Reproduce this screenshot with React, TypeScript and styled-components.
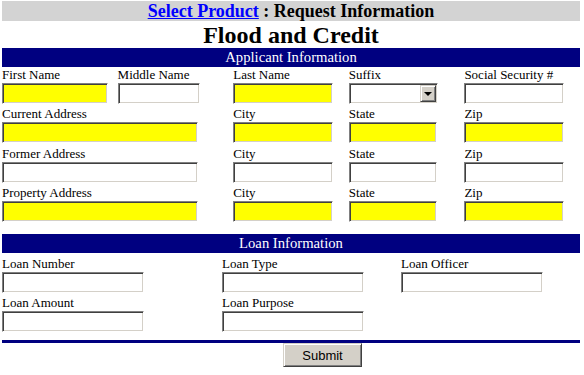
import * as React from 'react';
import styled, { createGlobalStyle } from 'styled-components';

const GlobalStyle = createGlobalStyle`
  body {
    margin: 0;
    background: #fff;
    font-family: 'Liberation Serif', 'Times New Roman', serif;
    color: #000;
  }
`;

export const Page = styled.div`
  width: 578px;
  padding: 1px 2px;
`;

export const TopBar = styled.div`
  height: 20px;
  line-height: 20px;
  background-color: #d3d3d3;
  text-align: center;
  font-size: 18px;
  font-weight: bold;
  white-space: nowrap;
`;

export const ProductLink = styled.a`
  color: #0000ff;
  text-decoration: underline;
`;

export const Title = styled.h1`
  margin: 0;
  height: 27px;
  line-height: 28px;
  font-size: 24px;
  font-weight: bold;
  text-align: center;
`;

export const SectionBar = styled.div<{ $gap?: number }>`
  margin-top: ${(props): number => props.$gap || 0}px;
  height: 19px;
  line-height: 19px;
  background-color: #000080;
  color: #fff;
  font-size: 14.67px;
  text-align: center;
`;

export const FieldGrid = styled.div<{ $columns: string; $top?: number }>`
  display: grid;
  grid-template-columns: ${(props): string => props.$columns};
  row-gap: 2.33px;
  padding-top: ${(props): number => props.$top || 0}px;
`;

export const Field = styled.div<{ $span?: number; $col?: number }>`
  display: flex;
  flex-direction: column;
  align-items: flex-start;
  min-width: 0;
  ${(props): string =>
    props.$col ? `grid-column: ${props.$col} / span ${props.$span || 1};` : `grid-column: span ${props.$span || 1};`}
`;

export const Label = styled.label`
  display: block;
  height: 16px;
  line-height: 16px;
  font-size: 13px;
  white-space: nowrap;
`;

export const TextBox = styled.input<{ $width: number; $required?: boolean }>`
  box-sizing: border-box;
  width: ${(props): number => props.$width}px;
  height: 21px;
  margin: 0;
  padding: 1px 3px;
  font: 13px 'Liberation Sans', Arial, sans-serif;
  background-color: ${(props): string => (props.$required ? '#ffff00' : '#ffffff')};
  border: 1px solid;
  border-color: #808080 #ffffff #ffffff #808080;
  box-shadow: inset 1px 1px 0 #404040, inset -1px -1px 0 #d4d0c8;
  outline: none;
`;

export const SelectBox = styled.div<{ $width: number }>`
  box-sizing: border-box;
  display: flex;
  width: ${(props): number => props.$width}px;
  height: 21px;
  padding: 2px;
  background-color: #fff;
  border: 1px solid;
  border-color: #808080 #ffffff #ffffff #808080;
  box-shadow: inset 1px 1px 0 #404040, inset -1px -1px 0 #d4d0c8;
`;

export const SelectValue = styled.div`
  flex: 1;
`;

export const ArrowButton = styled.div`
  box-sizing: border-box;
  display: flex;
  align-items: center;
  justify-content: center;
  width: 16px;
  margin: -1px -1px -1px 0;
  height: calc(100% + 2px);
  background-color: #d4d0c8;
  border: 1px solid;
  border-color: #d4d0c8 #404040 #404040 #d4d0c8;
  box-shadow: inset 1px 1px 0 #ffffff, inset -1px -1px 0 #808080;

  &::after {
    content: '';
    width: 0;
    height: 0;
    border-left: 4px solid transparent;
    border-right: 4px solid transparent;
    border-top: 4px solid #000;
    margin-top: 1px;
  }
`;

export const Rule = styled.div`
  margin-top: 8px;
  height: 3px;
  background-color: #000080;
`;

export const Footer = styled.div`
  display: flex;
  padding-left: 281px;
`;

export const SubmitButton = styled.button`
  box-sizing: border-box;
  width: 79px;
  height: 24px;
  padding: 0;
  font: 13px 'Liberation Sans', Arial, sans-serif;
  color: #000;
  background-color: #d4d0c8;
  border: 1px solid;
  border-color: #d4d0c8 #404040 #404040 #d4d0c8;
  box-shadow: inset 1px 1px 0 #ffffff, inset -1px -1px 0 #808080;
`;

type Input = { label: string; width: number; required?: boolean; span?: number; col?: number; select?: boolean };

const applicantRows: Input[][] = [
  [
    { label: 'First Name', width: 106, required: true },
    { label: 'Middle Name', width: 82 },
    { label: 'Last Name', width: 100, required: true },
    { label: 'Suffix', width: 89, select: true },
    { label: 'Social Security #', width: 100 },
  ],
  [
    { label: 'Current Address', width: 196, required: true, span: 2 },
    { label: 'City', width: 100, required: true },
    { label: 'State', width: 88, required: true },
    { label: 'Zip', width: 100, required: true },
  ],
  [
    { label: 'Former Address', width: 196, span: 2 },
    { label: 'City', width: 100 },
    { label: 'State', width: 88 },
    { label: 'Zip', width: 100 },
  ],
  [
    { label: 'Property Address', width: 196, required: true, span: 2 },
    { label: 'City', width: 100, required: true },
    { label: 'State', width: 88, required: true },
    { label: 'Zip', width: 100, required: true },
  ],
];

const loanFields: Input[] = [
  { label: 'Loan Number', width: 142 },
  { label: 'Loan Type', width: 142 },
  { label: 'Loan Officer', width: 142 },
  { label: 'Loan Amount', width: 142, col: 1 },
  { label: 'Loan Purpose', width: 142 },
];

const renderField = (f: Input, key: string): React.ReactElement => (
  <Field key={key} $span={f.span} $col={f.col}>
    <Label>{f.label}</Label>
    {f.select ? (
      <SelectBox $width={f.width}>
        <SelectValue />
        <ArrowButton />
      </SelectBox>
    ) : (
      <TextBox type="text" $width={f.width} $required={f.required} />
    )}
  </Field>
);

export default function App(): React.ReactElement {
  return (
    <>
      <GlobalStyle />
      <Page>
        <TopBar>
          <ProductLink href="#">Select Product</ProductLink> : Request Information
        </TopBar>
        <Title>Flood and Credit</Title>
        <SectionBar>Applicant Information</SectionBar>
        <FieldGrid $columns="repeat(5, 1fr)">
          {applicantRows.map((row, r) => row.map((f, i) => renderField(f, `${r}-${i}`)))}
        </FieldGrid>
        <SectionBar $gap={12}>Loan Information</SectionBar>
        <FieldGrid $columns="220px 179px 1fr" $top={3}>
          {loanFields.map((f, i) => renderField(f, `loan-${i}`))}
        </FieldGrid>
        <Rule />
        <Footer>
          <SubmitButton type="submit">Submit</SubmitButton>
        </Footer>
      </Page>
    </>
  );
}
